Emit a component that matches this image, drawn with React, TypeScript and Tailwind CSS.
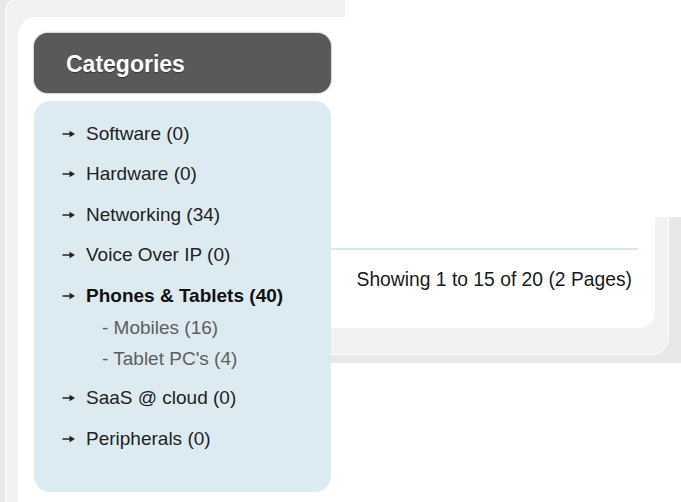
import type { ReactNode } from "react";

interface Category {
  name: string;
  count: number;
  active?: boolean;
  children?: { name: string; count: number }[];
}

const categories: Category[] = [
  { name: "Software", count: 0 },
  { name: "Hardware", count: 0 },
  { name: "Networking", count: 34 },
  { name: "Voice Over IP", count: 0 },
  {
    name: "Phones & Tablets",
    count: 40,
    active: true,
    children: [
      { name: "Mobiles", count: 16 },
      { name: "Tablet PC's", count: 4 },
    ],
  },
  { name: "SaaS @ cloud", count: 0 },
  { name: "Peripherals", count: 0 },
];

function Arrow() {
  return (
    <svg width="13" height="8" viewBox="0 0 13 8" className="shrink-0">
      <line x1="0.5" y1="4" x2="9" y2="4" stroke="#222" strokeWidth="1.5" />
      <path d="M7.5 0.8 L13 4 L7.5 7.2 Z" fill="#222" />
    </svg>
  );
}

function CategoryItem({ cat }: { cat: Category }) {
  return (
    <li>
      <div className="flex h-[40.5px] items-center">
        <span className="w-[52px] pl-[28px]">
          <Arrow />
        </span>
        <span className={cat.active ? "font-bold text-[#111]" : "text-[#222]"}>
          {cat.name} ({cat.count})
        </span>
      </div>
      {cat.children && (
        <ul className="-mt-[4px] mb-[4px] pl-[68px] text-[#5e5e5e]">
          {cat.children.map((sub) => (
            <li key={sub.name} className="h-[31px] leading-[31px]">
              - {sub.name} ({sub.count})
            </li>
          ))}
        </ul>
      )}
    </li>
  );
}

function Frame({ children }: { children: ReactNode }) {
  return <div className="font-['Liberation_Sans',Arial,sans-serif]">{children}</div>;
}

export default function App() {
  return (
    <Frame>
      <div className="grid h-[502px] w-[681px] overflow-hidden bg-white">
        {/* left panel: categories box */}
        <div className="col-start-1 row-start-1 h-[502px] w-[345px] overflow-hidden">
          <div className="flex h-full bg-[#e8e8e8] pl-[5px]">
            <div className="-mt-px min-w-[420px] flex-1 rounded-tl-[12px] border-l border-t border-white bg-[#f2f2f2] pl-[12px] pt-[17px]">
              <div className="h-[600px] rounded-tl-[18px] bg-white pl-[16px] pt-[16px]">
                <div className="w-[297px]">
                  <div className="flex h-[60px] items-center rounded-[14px] bg-[#595959] pl-[32px] pt-[3px] shadow-[0_0_2px_rgba(0,0,0,0.55)]">
                    <span className="text-[23px] font-bold text-white [text-shadow:0_1px_1px_rgba(0,0,0,0.4)]">
                      Categories
                    </span>
                  </div>
                  <div className="mt-[8px] h-[391px] rounded-[16px] bg-[#dcebf2] pt-[12.5px] text-[19px]">
                    <ul>
                      {categories.map((cat) => (
                        <CategoryItem key={cat.name} cat={cat} />
                      ))}
                    </ul>
                  </div>
                </div>
              </div>
            </div>
          </div>
        </div>

        {/* right panel: pagination summary */}
        <div className="col-start-1 row-start-1 ml-[331px] mt-[217px] h-[146px] w-[350px] self-start bg-[#e8e8e8] pb-[8px] pr-[12px]">
          <div className="h-full rounded-br-[18px] border-b border-r border-white bg-[#f2f2f2] pb-[26px] pr-[13px]">
            <div className="h-full rounded-br-[16px] bg-white pt-[31px]">
              <div className="h-[2px] w-[307px] bg-[#d3e8f0]" />
              <div className="mt-[19px] w-[301px] text-right text-[19.3px] leading-[22px] text-[#1a1a1a]">
                Showing 1 to 15 of 20 (2 Pages)
              </div>
            </div>
          </div>
        </div>
      </div>
    </Frame>
  );
}
